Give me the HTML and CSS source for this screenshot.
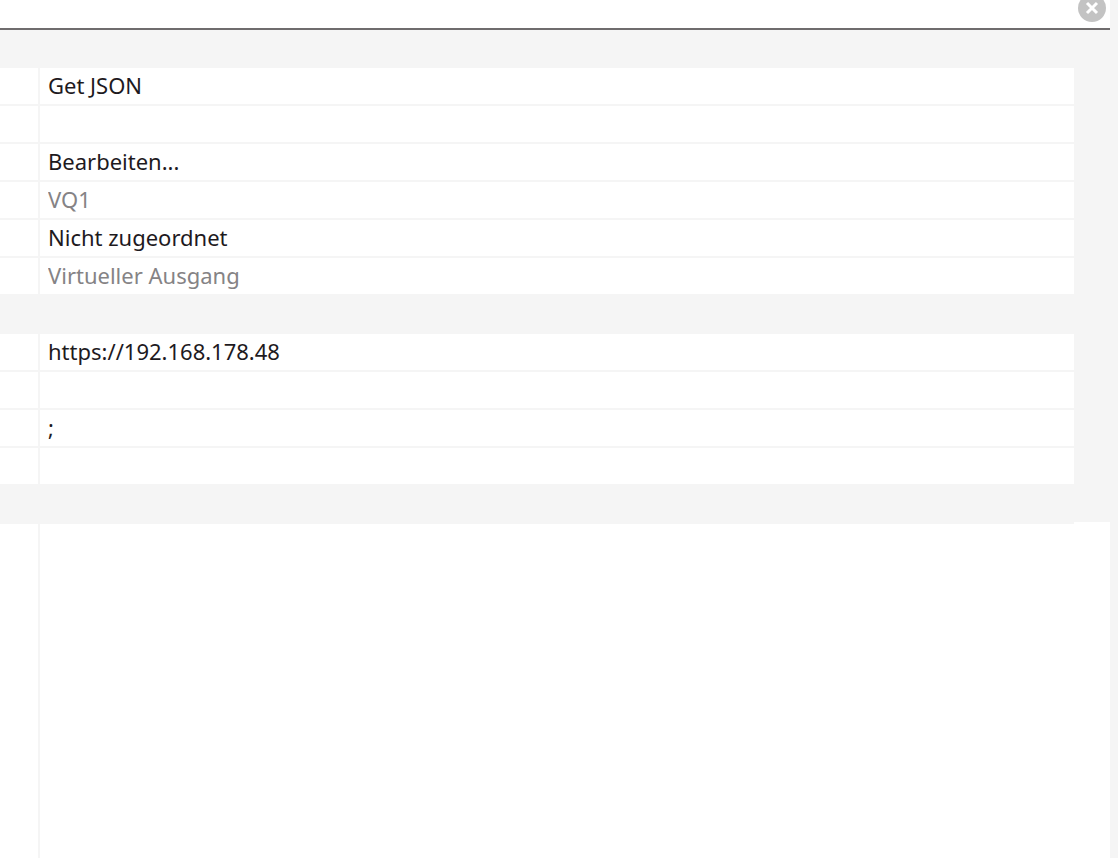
FILE: index.html
```
<!DOCTYPE html>
<html lang="de">
<head>
    <meta charset="UTF-8">
    <meta name="viewport" content="width=device-width, initial-scale=1.0">
    <title>Eigenschaften</title>
    <link rel="stylesheet" href="styles.css">
</head>
<body>
    <div class="panel">
        <div class="search-bar">
            <input type="text" class="search" aria-label="Suche">
            <button class="clear" aria-label="Suche löschen">
                <svg width="28" height="28" viewBox="0 0 28 28">
                    <circle cx="14" cy="14" r="14" fill="#c3c3c3"/>
                    <path d="M9 9l10 10M19 9l-10 10" stroke="#fff" stroke-width="3"/>
                </svg>
            </button>
        </div>
        <div class="properties">
            <table>
                <colgroup>
                    <col class="name-col">
                    <col>
                </colgroup>
                <tbody>
                    <tr class="group"><td colspan="2"></td></tr>
                    <tr><td class="name"></td><td><input type="text" aria-label="Bezeichnung" value="Get JSON"></td></tr>
                    <tr><td class="name"></td><td><input type="text" aria-label="Beschreibung"></td></tr>
                    <tr><td class="name"></td><td><button class="edit">Bearbeiten...</button></td></tr>
                    <tr><td class="name"></td><td><input type="text" aria-label="Anschluss" value="VQ1" disabled></td></tr>
                    <tr><td class="name"></td><td><select aria-label="Raum"><option>Nicht zugeordnet</option></select></td></tr>
                    <tr><td class="name"></td><td><input type="text" aria-label="Typ" value="Virtueller Ausgang" disabled></td></tr>
                </tbody>
                <tbody>
                    <tr class="group"><td colspan="2"></td></tr>
                    <tr><td class="name"></td><td><input type="text" aria-label="Adresse" value="https://192.168.178.48"></td></tr>
                    <tr><td class="name"></td><td><input type="text" aria-label="Befehl bei Verbindung"></td></tr>
                    <tr><td class="name"></td><td><input type="text" aria-label="Trennzeichen" value=";"></td></tr>
                    <tr><td class="name"></td><td><input type="text" aria-label="Optionen"></td></tr>
                    <tr class="group last"><td colspan="2"></td></tr>
                </tbody>
            </table>
        </div>
        <div class="rest">
            <div class="rest-grid">
                <div class="rest-name"></div>
            </div>
        </div>
    </div>
</body>
</html>
```

FILE: styles.css
```
* {
    box-sizing: border-box;
}
body {
    margin: 0;
    padding-right: 8px;
    background: #f5f5f5;
    color: #1e1a1e;
    font-family: "Noto Sans", sans-serif;
    font-size: 22px;
}
.panel {
    display: flex;
    flex-direction: column;
    min-height: 100vh;
}
.search-bar {
    display: flex;
    height: 30px;
    padding-right: 4px;
    background: #fff;
    border-bottom: 2px solid #6f6c6d;
}
.search {
    flex: 1;
}
.clear {
    height: 28px;
    margin-top: -6px;
    padding: 0;
    border: none;
    background: none;
}
.clear svg {
    display: block;
}
.properties {
    padding-right: 36px;
}
table {
    width: 100%;
    table-layout: fixed;
    border-collapse: separate;
    border-spacing: 0;
}
.name-col {
    width: 40px;
}
td {
    height: 38px;
    padding: 0;
    background: #fff;
    border-bottom: 2px solid #f5f5f5;
}
.name {
    border-right: 2px solid #f5f5f5;
}
.group td {
    background: #f5f5f5;
}
.last td {
    height: 36px;
    border-bottom: none;
}
input,
select,
.edit {
    display: block;
    width: 100%;
    height: 36px;
    margin: 0;
    padding: 0 8px 2px;
    border: none;
    outline: none;
    background: none;
    color: inherit;
    font: inherit;
    line-height: 34px;
    text-align: left;
    appearance: none;
}
.search-bar input {
    width: auto;
    height: 28px;
}
input:disabled {
    color: #858385;
}
.rest {
    display: flex;
    flex: 1;
    padding-right: 36px;
    background: #fff;
}
.rest-grid {
    display: flex;
    flex: 1;
    border-top: 2px solid #f5f5f5;
}
.rest-name {
    width: 40px;
    border-right: 2px solid #f5f5f5;
}
```
